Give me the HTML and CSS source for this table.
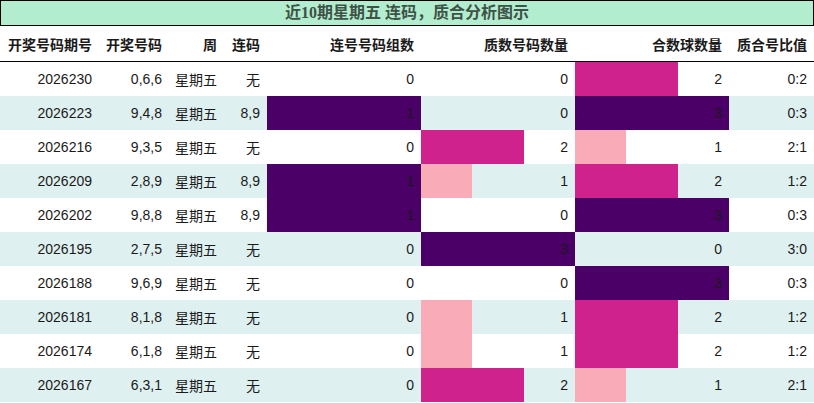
FILE: index.html
```html
<!DOCTYPE html>
<html lang="zh">
<head>
<meta charset="utf-8">
<link rel="stylesheet" href="styles.css">
</head>
<body>
<div class="chart">
  <div class="title">近10期星期五 连码，质合分析图示</div>
  <div class="row head">
    <div class="c">开奖号码期号</div>
    <div class="c">开奖号码</div>
    <div class="c">周</div>
    <div class="c">连码</div>
    <div class="c">连号号码组数</div>
    <div class="c">质数号码数量</div>
    <div class="c">合数球数量</div>
    <div class="c">质合号比值</div>
  </div>

  <div class="row">
    <div class="c">2026230</div><div class="c">0,6,6</div><div class="c">星期五</div><div class="c">无</div>
    <div class="c bc"><span class="v">0</span></div>
    <div class="c bc"><span class="v">0</span></div>
    <div class="c bc"><i class="bar b2" style="width:103px"></i><span class="v">2</span></div>
    <div class="c">0:2</div>
  </div>
  <div class="row alt">
    <div class="c">2026223</div><div class="c">9,4,8</div><div class="c">星期五</div><div class="c">8,9</div>
    <div class="c bc"><i class="bar b3" style="width:154px"></i><span class="v">1</span></div>
    <div class="c bc"><span class="v">0</span></div>
    <div class="c bc"><i class="bar b3" style="width:154px"></i><span class="v">3</span></div>
    <div class="c">0:3</div>
  </div>
  <div class="row">
    <div class="c">2026216</div><div class="c">9,3,5</div><div class="c">星期五</div><div class="c">无</div>
    <div class="c bc"><span class="v">0</span></div>
    <div class="c bc"><i class="bar b2" style="width:103px"></i><span class="v">2</span></div>
    <div class="c bc"><i class="bar b1" style="width:51px"></i><span class="v">1</span></div>
    <div class="c">2:1</div>
  </div>
  <div class="row alt">
    <div class="c">2026209</div><div class="c">2,8,9</div><div class="c">星期五</div><div class="c">8,9</div>
    <div class="c bc"><i class="bar b3" style="width:154px"></i><span class="v">1</span></div>
    <div class="c bc"><i class="bar b1" style="width:51px"></i><span class="v">1</span></div>
    <div class="c bc"><i class="bar b2" style="width:103px"></i><span class="v">2</span></div>
    <div class="c">1:2</div>
  </div>
  <div class="row">
    <div class="c">2026202</div><div class="c">9,8,8</div><div class="c">星期五</div><div class="c">8,9</div>
    <div class="c bc"><i class="bar b3" style="width:154px"></i><span class="v">1</span></div>
    <div class="c bc"><span class="v">0</span></div>
    <div class="c bc"><i class="bar b3" style="width:154px"></i><span class="v">3</span></div>
    <div class="c">0:3</div>
  </div>
  <div class="row alt">
    <div class="c">2026195</div><div class="c">2,7,5</div><div class="c">星期五</div><div class="c">无</div>
    <div class="c bc"><span class="v">0</span></div>
    <div class="c bc"><i class="bar b3" style="width:154px"></i><span class="v">3</span></div>
    <div class="c bc"><span class="v">0</span></div>
    <div class="c">3:0</div>
  </div>
  <div class="row">
    <div class="c">2026188</div><div class="c">9,6,9</div><div class="c">星期五</div><div class="c">无</div>
    <div class="c bc"><span class="v">0</span></div>
    <div class="c bc"><span class="v">0</span></div>
    <div class="c bc"><i class="bar b3" style="width:154px"></i><span class="v">3</span></div>
    <div class="c">0:3</div>
  </div>
  <div class="row alt">
    <div class="c">2026181</div><div class="c">8,1,8</div><div class="c">星期五</div><div class="c">无</div>
    <div class="c bc"><span class="v">0</span></div>
    <div class="c bc"><i class="bar b1" style="width:51px"></i><span class="v">1</span></div>
    <div class="c bc"><i class="bar b2" style="width:103px"></i><span class="v">2</span></div>
    <div class="c">1:2</div>
  </div>
  <div class="row">
    <div class="c">2026174</div><div class="c">6,1,8</div><div class="c">星期五</div><div class="c">无</div>
    <div class="c bc"><span class="v">0</span></div>
    <div class="c bc"><i class="bar b1" style="width:51px"></i><span class="v">1</span></div>
    <div class="c bc"><i class="bar b2" style="width:103px"></i><span class="v">2</span></div>
    <div class="c">1:2</div>
  </div>
  <div class="row alt">
    <div class="c">2026167</div><div class="c">6,3,1</div><div class="c">星期五</div><div class="c">无</div>
    <div class="c bc"><span class="v">0</span></div>
    <div class="c bc"><i class="bar b2" style="width:103px"></i><span class="v">2</span></div>
    <div class="c bc"><i class="bar b1" style="width:51px"></i><span class="v">1</span></div>
    <div class="c">2:1</div>
  </div>
</div>
</body>
</html>
```

FILE: styles.css
```css
* { box-sizing: border-box; }
html, body { margin: 0; padding: 0; background: #fff; }
body {
  font-family: "Liberation Sans", Arial, "Noto Sans CJK SC", sans-serif;
  font-size: 14px;
  color: #1a1a1a;
}
.chart { width: 814px; }
.title {
  height: 26px;
  border: 1px solid #000;
  background: #b3edd0;
  color: #3e5246;
  font-family: "Liberation Serif", "Noto Sans CJK SC", serif;
  font-weight: bold;
  font-size: 16px;
  line-height: 24px;
  text-align: center;
}
.row {
  display: grid;
  grid-template-columns: 99px 70px 55px 43px 154px 154px 154px 85px;
  height: 34px;
  background: #fff;
}
.row.alt { background: #dff0f0; }
.row.head {
  height: 36px;
  border-bottom: 1px solid #000;
  font-weight: bold;
  color: #1a1a1a;
}
.c {
  display: flex;
  align-items: center;
  justify-content: flex-end;
  padding-right: 7px;
  white-space: nowrap;
  position: relative;
}
.bc .v { position: relative; }
.bar {
  position: absolute;
  left: 0;
  top: 0;
  bottom: 0;
}
.b1 { background: #f9abb8; }
.b2 { background: #cf228d; }
.b3 { background: #4a0066; }
```
